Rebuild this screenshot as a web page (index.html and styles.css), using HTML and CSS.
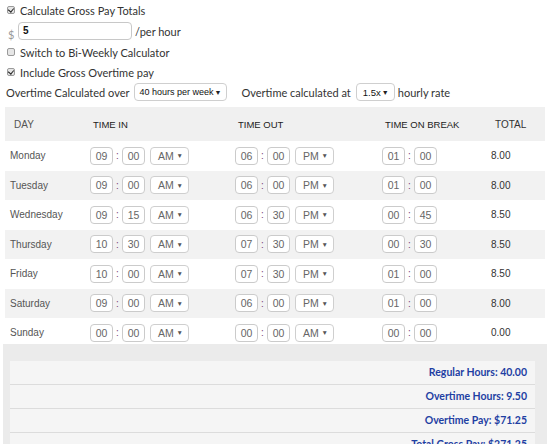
FILE: index.html
```html
<!DOCTYPE html>
<html>
<head>
<meta charset="utf-8">
<link rel="stylesheet" href="styles.css">
</head>
<body>
<div class="opts">
  <div class="line"><span class="box on"></span><span>Calculate Gross Pay Totals</span></div>
  <div class="line rate"><span class="dollar">$</span><span class="field">5</span><span>/per hour</span></div>
  <div class="line"><span class="box"></span><span>Switch to Bi-Weekly Calculator</span></div>
  <div class="line"><span class="box on"></span><span>Include Gross Overtime pay</span></div>
  <div class="line ot">
    <span>Overtime Calculated over</span>
    <span class="sel wide">40 hours per week<span class="arr">▼</span></span>
    <span class="ot2">Overtime calculated at</span>
    <span class="sel small">1.5x<span class="arr">▼</span></span>
    <span>hourly rate</span>
  </div>
</div>

<div class="table">
  <div class="row head">
    <div class="c day">DAY</div>
    <div class="c">TIME IN</div>
    <div class="c">TIME OUT</div>
    <div class="c">TIME ON BREAK</div>
    <div class="c total">TOTAL</div>
  </div>

  <div class="row">
    <div class="c day">Monday</div>
    <div class="c t"><span class="in">09</span><span class="col">:</span><span class="in">00</span><span class="sel ap">AM<span class="arr">▼</span></span></div>
    <div class="c t"><span class="in">06</span><span class="col">:</span><span class="in">00</span><span class="sel ap">PM<span class="arr">▼</span></span></div>
    <div class="c t"><span class="in">01</span><span class="col">:</span><span class="in">00</span></div>
    <div class="c total">8.00</div>
  </div>
  <div class="row">
    <div class="c day">Tuesday</div>
    <div class="c t"><span class="in">09</span><span class="col">:</span><span class="in">00</span><span class="sel ap">AM<span class="arr">▼</span></span></div>
    <div class="c t"><span class="in">06</span><span class="col">:</span><span class="in">00</span><span class="sel ap">PM<span class="arr">▼</span></span></div>
    <div class="c t"><span class="in">01</span><span class="col">:</span><span class="in">00</span></div>
    <div class="c total">8.00</div>
  </div>
  <div class="row">
    <div class="c day">Wednesday</div>
    <div class="c t"><span class="in">09</span><span class="col">:</span><span class="in">15</span><span class="sel ap">AM<span class="arr">▼</span></span></div>
    <div class="c t"><span class="in">06</span><span class="col">:</span><span class="in">30</span><span class="sel ap">PM<span class="arr">▼</span></span></div>
    <div class="c t"><span class="in">00</span><span class="col">:</span><span class="in">45</span></div>
    <div class="c total">8.50</div>
  </div>
  <div class="row">
    <div class="c day">Thursday</div>
    <div class="c t"><span class="in">10</span><span class="col">:</span><span class="in">30</span><span class="sel ap">AM<span class="arr">▼</span></span></div>
    <div class="c t"><span class="in">07</span><span class="col">:</span><span class="in">30</span><span class="sel ap">PM<span class="arr">▼</span></span></div>
    <div class="c t"><span class="in">00</span><span class="col">:</span><span class="in">30</span></div>
    <div class="c total">8.50</div>
  </div>
  <div class="row">
    <div class="c day">Friday</div>
    <div class="c t"><span class="in">10</span><span class="col">:</span><span class="in">00</span><span class="sel ap">AM<span class="arr">▼</span></span></div>
    <div class="c t"><span class="in">07</span><span class="col">:</span><span class="in">30</span><span class="sel ap">PM<span class="arr">▼</span></span></div>
    <div class="c t"><span class="in">01</span><span class="col">:</span><span class="in">00</span></div>
    <div class="c total">8.50</div>
  </div>
  <div class="row">
    <div class="c day">Saturday</div>
    <div class="c t"><span class="in">09</span><span class="col">:</span><span class="in">00</span><span class="sel ap">AM<span class="arr">▼</span></span></div>
    <div class="c t"><span class="in">06</span><span class="col">:</span><span class="in">00</span><span class="sel ap">PM<span class="arr">▼</span></span></div>
    <div class="c t"><span class="in">01</span><span class="col">:</span><span class="in">00</span></div>
    <div class="c total">8.00</div>
  </div>
  <div class="row">
    <div class="c day">Sunday</div>
    <div class="c t"><span class="in">00</span><span class="col">:</span><span class="in">00</span><span class="sel ap">AM<span class="arr">▼</span></span></div>
    <div class="c t"><span class="in">00</span><span class="col">:</span><span class="in">00</span><span class="sel ap">AM<span class="arr">▼</span></span></div>
    <div class="c t"><span class="in">00</span><span class="col">:</span><span class="in">00</span></div>
    <div class="c total">0.00</div>
  </div>
</div>

<div class="summary">
  <div class="sbox">
    <div class="srow">Regular Hours: 40.00</div>
    <div class="srow">Overtime Hours: 9.50</div>
    <div class="srow">Overtime Pay: $71.25</div>
    <div class="srow">Total Gross Pay: $271.25</div>
  </div>
</div>
</body>
</html>
```

FILE: styles.css
```css
* { box-sizing: border-box; }
html, body { margin: 0; padding: 0; background: #fff; }
body {
  padding: 0 5px;
  font-family: Lato, "Liberation Sans", sans-serif;
  font-size: 11px;
  color: #333;
  overflow: hidden;
  height: 444px;
}
.opts { padding-left: 1px; }
.line {
  display: flex;
  align-items: center;
  height: 20px;
  white-space: nowrap;
}
.box {
  width: 8px;
  height: 8px;
  margin: 0 5px 0 1px;
  border: 1px solid #9a9a9a;
  border-radius: 2px;
  background: #e6e6e6;
  position: relative;
}
.box.on::after {
  content: "";
  position: absolute;
  left: 1px;
  top: 0px;
  width: 3px;
  height: 4px;
  border: solid #222;
  border-width: 0 1.5px 1.5px 0;
  transform: rotate(40deg);
}
.rate { height: 22px; }
.dollar {
  color: #999;
  font-size: 11px;
  margin: 6px 2px 0 2px;
  width: 8px;
}
.field {
  width: 114px;
  height: 18px;
  border: 1px solid #c8c8c8;
  border-radius: 4px;
  padding-left: 4px;
  font-family: "Liberation Sans", Arial, sans-serif;
  font-size: 10px;
  font-weight: bold;
  color: #111;
  line-height: 16px;
  margin-right: 3px;
}
.ot { height: 20px; margin-bottom: 5px; }
.sel {
  display: inline-flex;
  align-items: center;
  justify-content: space-between;
  height: 18px;
  border: 1px solid #cfcfcf;
  border-radius: 4px;
  font-family: "Liberation Sans", Arial, sans-serif;
  font-size: 9.5px;
  color: #111;
  padding: 0 5px 0 5px;
  background: #fff;
}
.arr { font-size: 7px; color: #222; }
.sel.wide { width: 93px; margin: 0 0 0 5px; font-size: 9px; padding: 0 5px 0 4px; }
.ot2 { margin-left: 14px; }
.small { width: 39px; margin: 0 3px 0 5px; padding-left: 6px; }

.table { font-family: "Liberation Sans", Arial, sans-serif; }
.row {
  display: grid;
  grid-template-columns: 85px 145px 147px 109px 1fr;
  align-items: center;
  height: 29.5px;
}
.row:nth-child(odd) { background: #f2f2f2; }
.row.head {
  height: 34px;
  background: #f0f0f0;
  font-size: 9.5px;
  color: #222;
}
.head .c { padding-left: 3px; }
.head .c.day { padding-left: 9px; }
.head .c.total { padding-left: 4px; }
.c { display: flex; align-items: center; }
.c.day { padding-left: 5px; font-size: 10px; color: #555; }
.c.total { padding-left: 0; font-size: 10px; color: #333; }
.in {
  width: 23px;
  height: 18px;
  border: 1px solid #cbcbcb;
  border-radius: 4px;
  display: flex;
  align-items: center;
  justify-content: center;
  font-size: 10.5px;
  color: #666;
  background: #fff;
}
.col {
  width: 9px;
  text-align: center;
  font-size: 10px;
  color: #7b3f73;
}
.sel.ap {
  width: 39px;
  margin-left: 5px;
  color: #666;
  font-size: 10.5px;
  padding: 0 5px 0 7px;
}
.ap .arr { color: #555; font-size: 6.5px; }

.summary {
  margin: -4px -2px 0 -2px;
  background: #ebebeb;
  padding: 17px 12px 0 7px;
  height: 110px;
}
.sbox { background: #f5f5f5; }
.srow {
  height: 24px;
  border-bottom: 1px solid #dcdcdc;
  display: flex;
  align-items: center;
  justify-content: flex-end;
  padding-right: 8px;
  font-family: Lato, sans-serif;
  font-weight: bold;
  font-size: 10.5px;
  color: #1f3fa3;
}
```
